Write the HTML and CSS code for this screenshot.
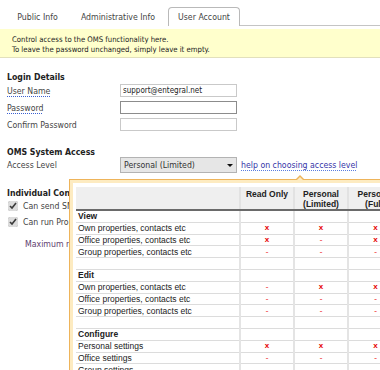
FILE: index.html
```html
<!DOCTYPE html>
<html>
<head>
  <meta charset="utf-8">
  <title>User Account</title>
  <link rel="stylesheet" href="styles.css">
</head>
<body>
  <!-- Tabs -->
  <div class="tabs">
    <span class="tab tab-public">Public Info</span>
    <span class="tab tab-admin">Administrative Info</span>
    <span class="tab tab-user active">User Account</span>
    <span class="tab-rest"></span>
  </div>

  <!-- Notice -->
  <div class="notice">
    Control access to the OMS functionality here.<br>
    To leave the password unchanged, simply leave it empty.
  </div>

  <div class="form">
    <!-- Login Details -->
    <h2 class="first">Login Details</h2>
    <div class="field">
      <label class="hint">User Name</label>
      <input type="text" class="text-input" value="support@entegral.net">
    </div>
    <div class="field">
      <label class="hint">Password</label>
      <input type="password" class="text-input focused">
    </div>
    <div class="field">
      <label>Confirm Password</label>
      <input type="password" class="text-input">
    </div>

    <!-- OMS System Access -->
    <h2 class="access-title">OMS System Access</h2>
    <div class="field access-row">
      <label>Access Level</label>
      <span class="select-wrap">
        <select class="select">
          <option>Personal (Limited)</option>
        </select>
      </span>
      <a class="help-link" href="#">help on choosing access level</a>
    </div>

    <!-- Individual Controls -->
    <h2 class="controls-title">Individual Controls</h2>
    <label class="check-row"><input type="checkbox" checked> Can send SMS messages</label>
    <label class="check-row"><input type="checkbox" checked> Can run Property reports</label>
    <div class="max-row">Maximum records per export</div>
  </div>

  <!-- Access level help popup -->
  <div class="popup">
    <table class="matrix">
      <colgroup>
        <col class="col-label">
        <col class="col-level">
        <col class="col-level">
        <col class="col-level">
      </colgroup>
      <thead>
        <tr>
          <th></th>
          <th>Read Only</th>
          <th>Personal<br>(Limited)</th>
          <th>Personal<br>(Full)</th>
        </tr>
      </thead>
      <tbody>
        <tr class="group"><td class="label">View</td><td></td><td></td><td></td></tr>
        <tr><td class="label">Own properties, contacts etc</td><td class="yes">x</td><td class="yes">x</td><td class="yes">x</td></tr>
        <tr><td class="label">Office properties, contacts etc</td><td class="yes">x</td><td class="no">-</td><td class="yes">x</td></tr>
        <tr><td class="label">Group properties, contacts etc</td><td class="no">-</td><td class="no">-</td><td class="no">-</td></tr>
        <tr class="blank"><td class="label"></td><td></td><td></td><td></td></tr>
        <tr class="group"><td class="label">Edit</td><td></td><td></td><td></td></tr>
        <tr><td class="label">Own properties, contacts etc</td><td class="no">-</td><td class="yes">x</td><td class="yes">x</td></tr>
        <tr><td class="label">Office properties, contacts etc</td><td class="no">-</td><td class="no">-</td><td class="no">-</td></tr>
        <tr><td class="label">Group properties, contacts etc</td><td class="no">-</td><td class="no">-</td><td class="no">-</td></tr>
        <tr class="blank"><td class="label"></td><td></td><td></td><td></td></tr>
        <tr class="group"><td class="label">Configure</td><td></td><td></td><td></td></tr>
        <tr><td class="label">Personal settings</td><td class="yes">x</td><td class="yes">x</td><td class="yes">x</td></tr>
        <tr><td class="label">Office settings</td><td class="no">-</td><td class="no">-</td><td class="no">-</td></tr>
        <tr><td class="label">Group settings</td><td class="no">-</td><td class="no">-</td><td class="no">-</td></tr>
      </tbody>
    </table>
  </div>
</body>
</html>
```

FILE: styles.css
```css
body {
  margin: 0;
  width: 380px;
  height: 370px;
  overflow: hidden;
  position: relative;
  font-family: "DejaVu Sans Condensed", "DejaVu Sans", sans-serif;
  font-size: 8.7px;
  color: #333;
  background: #fff;
}

/* Tabs */
.tabs {
  display: flex;
  align-items: flex-end;
  height: 19px;
  margin-top: 7px;
}

.tab {
  display: block;
  height: 18px;
  line-height: 18px;
  text-align: center;
  color: #444;
}

.tab-public {
  width: 59px;
  margin-left: 8px;
}

.tab-admin {
  width: 78px;
  margin-left: 12px;
}

.tab-user {
  width: 70px;
  margin-left: 11px;
}

.tab.active {
  background: #fff;
  border: 1px solid #b9b9b9;
  border-bottom: none;
  border-radius: 4px 4px 0 0;
}

.tab-rest {
  flex: 1;
  border-bottom: 1px solid #c4c4c4;
}

/* Notice */
.notice {
  margin-top: 3px;
  padding: 6px 12px 3px;
  background: #ffffcc;
  border-bottom: 1px solid #e2e0bc;
  font-size: 7.7px;
  line-height: 9.5px;
  color: #222;
}

/* Form */
.form {
  padding-left: 7px;
}

.form h2 {
  margin: 0;
  font-size: 8.7px;
  line-height: 11px;
  font-weight: bold;
  color: #222;
}

.form h2.first {
  margin-top: 15px;
  line-height: 9px;
}

.form h2.access-title {
  margin-top: 15px;
  line-height: 9px;
}

.form h2.controls-title {
  margin-top: 14px;
}

.field {
  display: flex;
  align-items: center;
  height: 17px;
}

.field label {
  width: 113px;
  color: #444;
}

.hint {
  text-decoration: underline dotted #3b5fd0;
  text-underline-offset: 2px;
}

.field label.hint {
  width: auto;
  margin-right: auto;
}

.text-input {
  box-sizing: border-box;
  width: 117px;
  height: 13px;
  margin: 0 143px 0 auto;
  padding: 0 2px;
  border: 1px solid #c9c9c9;
  font-family: "DejaVu Sans Condensed", "DejaVu Sans", sans-serif;
  font-size: 8px;
  color: #222;
  outline: none;
}

.text-input.focused {
  border-color: #8c8c8c;
}

.access-row {
  height: 18px;
  margin-top: -1px;
}

.select-wrap {
  position: relative;
  display: block;
}

.select-wrap::after {
  content: "";
  position: absolute;
  right: 4px;
  top: 7px;
  border-left: 3px solid transparent;
  border-right: 3px solid transparent;
  border-top: 3px solid #111;
  pointer-events: none;
}

.select {
  appearance: none;
  box-sizing: border-box;
  display: block;
  width: 117px;
  height: 16px;
  margin: 0;
  padding: 0 3px;
  border: 1px solid #b3b3b3;
  border-radius: 0;
  background: #e6e6e6;
  font-family: "DejaVu Sans Condensed", "DejaVu Sans", sans-serif;
  font-size: 8.7px;
  color: #333;
}

.help-link {
  margin-left: 4px;
  color: #3535a8;
  text-decoration: underline dotted #5a7de0;
  text-underline-offset: 2px;
}

.check-row {
  display: flex;
  align-items: center;
  height: 16px;
  color: #444;
}

.check-row:first-of-type {
  margin-top: -1px;
}

.check-row input {
  width: 10px;
  height: 10px;
  margin: 0 5px 0 1px;
  accent-color: #dcdcdc;
}

.max-row {
  margin-top: 9px;
  padding-left: 18px;
  line-height: 11px;
  color: #5e3d6e;
}

/* Help popup */
.popup {
  position: absolute;
  left: 69px;
  top: 179px;
  width: 340px;
  height: 220px;
  padding: 7px 0 0 6px;
  background: #fff;
  border: 1px solid #eeb45a;
  box-shadow: inset 0 0 0 3px #fdebc1;
}

.popup::before,
.popup::after {
  content: "";
  position: absolute;
  left: 225px;
  border-left: 5px solid transparent;
  border-right: 5px solid transparent;
}

.popup::before {
  top: -5px;
  border-bottom: 5px solid #eeb45a;
}

.popup::after {
  top: -3px;
  left: 226px;
  border-left-width: 4px;
  border-right-width: 4px;
  border-bottom: 4px solid #fdebc1;
}

.matrix {
  border-collapse: collapse;
  table-layout: fixed;
  width: 325px;
  font-family: "Liberation Sans", Arial, sans-serif;
  font-size: 8.5px;
  color: #222;
}

.col-label {
  width: 164px;
}

.col-level {
  width: 54px;
}

.matrix th {
  height: 19px;
  padding: 2px 0 0;
  vertical-align: top;
  line-height: 10px;
  font-weight: bold;
  background: #efefef;
  border-left: 2px solid #e2e2e2;
  border-bottom: 2px solid #6a6a6a;
}

.matrix th:first-child {
  border-left: none;
}

.matrix td {
  height: 10.8px;
  padding: 0;
  line-height: 10px;
  text-align: center;
  border-left: 2px solid #e4e4e4;
  border-bottom: 1px solid #dcdcdc;
}

.matrix td.label {
  padding-left: 2px;
  text-align: left;
  border-left: none;
}

.matrix tr.group td.label {
  font-weight: bold;
}

.matrix td.yes {
  color: #e60000;
  font-weight: bold;
  font-size: 8px;
}

.matrix td.no {
  color: #f25c5c;
  font-size: 8px;
  font-weight: bold;
}
```
